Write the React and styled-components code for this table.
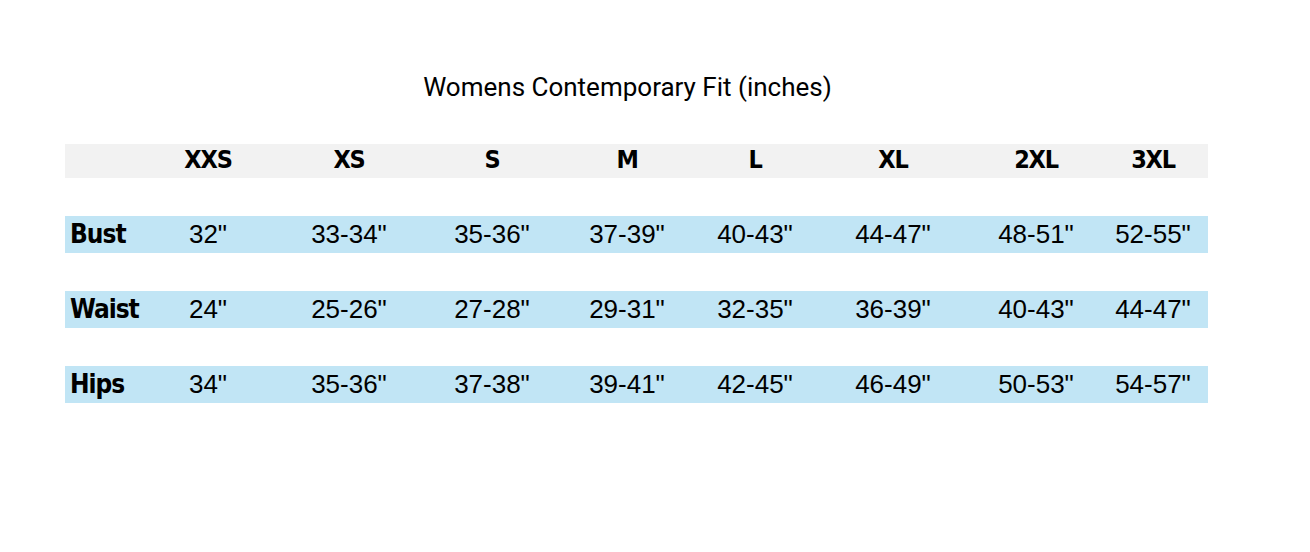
import React from "react";
import styled, { createGlobalStyle } from "styled-components";

const sizes = ["XXS", "XS", "S", "M", "L", "XL", "2XL", "3XL"];

const rows = [
  { label: "Bust", values: ['32"', '33-34"', '35-36"', '37-39"', '40-43"', '44-47"', '48-51"', '52-55"'] },
  { label: "Waist", values: ['24"', '25-26"', '27-28"', '29-31"', '32-35"', '36-39"', '40-43"', '44-47"'] },
  { label: "Hips", values: ['34"', '35-36"', '37-38"', '39-41"', '42-45"', '46-49"', '50-53"', '54-57"'] },
];

const GlobalStyle = createGlobalStyle`
  html, body {
    margin: 0;
    padding: 0;
    background: #ffffff;
  }
`;

const App = () => {
  return (
    <Page>
      <GlobalStyle />
      <Title>Womens Contemporary Fit (inches)</Title>
      <Table>
        <Row $bg="#f2f2f2" $h={34}>
          <LabelCell />
          {sizes.map((size) => (
            <HeadCell key={size}>{size}</HeadCell>
          ))}
        </Row>
        {rows.map((row) => (
          <Row key={row.label} $bg="#c1e5f5" $h={37}>
            <LabelCell>{row.label}</LabelCell>
            {row.values.map((v, i) => (
              <ValueCell key={i}>{v}</ValueCell>
            ))}
          </Row>
        ))}
      </Table>
    </Page>
  );
};

const Page = styled.div`
  width: 1310px;
  height: 552px;
  padding: 72px 0 0 65px;
  box-sizing: border-box;
`;

const Title = styled.div`
  width: 1143px;
  padding-right: 18px;
  box-sizing: border-box;
  text-align: center;
  font-family: "Roboto", "Open Sans", sans-serif;
  font-size: 26px;
  color: #000;
  line-height: 30px;
  margin-bottom: 42px;
`;

const Table = styled.div`
  display: flex;
  flex-direction: column;
  gap: 38px;
  width: 1143px;
`;

const Row = styled.div`
  display: grid;
  grid-template-columns: 72px 142px 140px 146px 124px 132px 144px 142px 92px 1fr;
  align-items: center;
  height: ${(p) => p.$h}px;
  background: ${(p) => p.$bg};
  font-family: "DejaVu Sans Condensed", "Liberation Sans", sans-serif;
  color: #000;
`;

const LabelCell = styled.div`
  padding-left: 5px;
  font-weight: bold;
  font-size: 26px;
  letter-spacing: -1px;
  white-space: nowrap;
  margin-top: -1px;
`;

const HeadCell = styled.div`
  text-align: center;
  font-weight: bold;
  font-size: 25px;
  letter-spacing: -1.2px;
  margin-top: -4px;
`;

const ValueCell = styled.div`
  text-align: center;
  font-family: "Liberation Sans", Arial, sans-serif;
  font-size: 26px;
  margin-top: -1px;
`;

export default App;
